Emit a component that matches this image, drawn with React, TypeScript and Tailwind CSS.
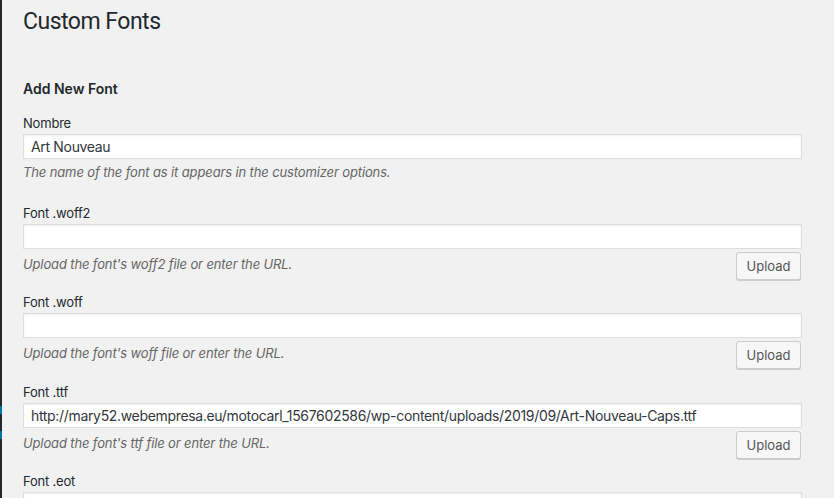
import React from "react";

type Field = {
  label: string;
  value: string;
  desc?: string;
  upload: boolean;
};

const fields: Field[] = [
  {
    label: "Nombre",
    value: "Art Nouveau",
    desc: "The name of the font as it appears in the customizer options.",
    upload: false,
  },
  {
    label: "Font .woff2",
    value: "",
    desc: "Upload the font's woff2 file or enter the URL.",
    upload: true,
  },
  {
    label: "Font .woff",
    value: "",
    desc: "Upload the font's woff file or enter the URL.",
    upload: true,
  },
  {
    label: "Font .ttf",
    value:
      "http://mary52.webempresa.eu/motocarl_1567602586/wp-content/uploads/2019/09/Art-Nouveau-Caps.ttf",
    desc: "Upload the font's ttf file or enter the URL.",
    upload: true,
  },
  {
    label: "Font .eot",
    value: "",
    upload: false,
  },
];

function FieldGroup({ f }: { f: Field }) {
  return (
    <div className="mb-[12.5px]">
      <div className="text-[13px] leading-[20px] tracking-[-0.2px] text-[#23282d] mb-[1px]">{f.label}</div>
      <div className="h-[25px] bg-white border border-[#dddddd] shadow-[inset_0_1px_2px_rgba(0,0,0,0.07)] px-[7px] flex items-center text-[14px] tracking-[-0.33px] text-[#32373c] whitespace-nowrap overflow-hidden">
        {f.value}
      </div>
      {f.desc && (
        <div className="min-h-[31px] flex items-start justify-between">
          <div
            className={
              f.upload
                ? "pt-[5px] text-[13px] leading-[20px] tracking-[-0.13px] italic text-[#666666]"
                : "pt-[3px] text-[13px] leading-[20px] tracking-[-0.13px] italic text-[#666666]"
            }
          >
            {f.desc}
          </div>
          {f.upload && (
            <button className="mt-[3px] mr-[1px] h-[28px] w-[65px] rounded-[3px] border border-[#cccccc] bg-[#f7f7f7] shadow-[0_1px_0_#cccccc] text-[13px] text-[#555555] leading-[26px]">
              Upload
            </button>
          )}
        </div>
      )}
    </div>
  );
}

export default function App() {
  return (
    <div className="h-[498px] overflow-hidden flex bg-[#f1f1f1] font-['Inter','Liberation_Sans',sans-serif]">
      <div className="w-[2px] shrink-0 flex flex-col bg-[#23282d]">
        <div className="h-[406px]" />
        <div className="h-[8px] bg-[#0073aa]" />
        <div className="h-[17px]" />
        <div className="h-[8px] bg-[#0073aa]" />
      </div>
      <div className="flex-1 pl-[21px] pr-[32px]">
        <h1 className="pt-[7px] font-['Roboto','Liberation_Sans',sans-serif] text-[23px] leading-[30px] tracking-[-0.5px] font-normal text-[#23282d]">
          Custom Fonts
        </h1>
        <h2 className="mt-[42px] text-[14px] leading-[20px] font-semibold text-[#23282d]">Add New Font</h2>
        <div className="mt-[14px]">
          {fields.map((f) => (
            <FieldGroup key={f.label} f={f} />
          ))}
        </div>
      </div>
    </div>
  );
}
